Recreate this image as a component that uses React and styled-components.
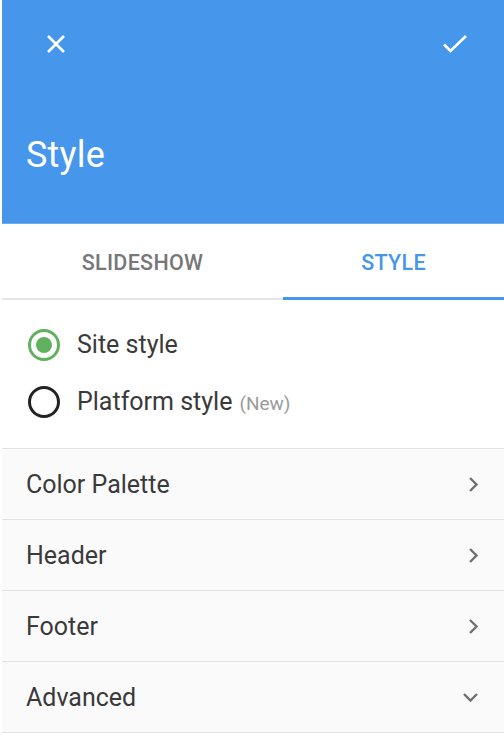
import React, { Component } from 'react'
import styled, { createGlobalStyle } from 'styled-components'

const GlobalStyle = createGlobalStyle`
  html, body {
    margin: 0;
    padding: 0;
    background: #ffffff;
  }
  body {
    font-family: Roboto, "Noto Sans", "Liberation Sans", sans-serif;
  }
`

const Page = styled.div`
  margin-left: 2px;
  width: 502px;
  height: 742px;
  background: #ffffff;
  overflow: hidden;
`

const Header = styled.header`
  height: 224px;
  background: #4696eb;
  color: #ffffff;
  display: flex;
  flex-direction: column;
  border-bottom: 1px solid #70adef;
  box-sizing: border-box;
`

const Toolbar = styled.div`
  height: 88px;
  display: flex;
  align-items: center;
  justify-content: space-between;
  padding: 0 29px 0 34px;
`

const IconButton = styled.button`
  width: 40px;
  height: 40px;
  padding: 0;
  border: none;
  background: transparent;
  display: flex;
  align-items: center;
  justify-content: center;
  cursor: pointer;
`

const Title = styled.h1`
  margin: 45px 0 0 24px;
  font-size: 36px;
  line-height: 44px;
  font-weight: 400;
  letter-spacing: 0.2px;
`

const Tabs = styled.nav`
  display: flex;
  height: 76px;
`

const Tab = styled.div`
  flex: 0 0 ${p => p.$width};
  display: flex;
  align-items: center;
  justify-content: center;
  padding-top: 3px;
  box-sizing: border-box;
  font-size: 21.5px;
  font-weight: 500;
  letter-spacing: 0.3px;
  color: ${p => (p.$active ? '#4696eb' : '#777777')};
  border-bottom: ${p => (p.$active ? '3px solid #4696eb' : '2px solid #e6e6e6')};
  cursor: pointer;
`

const RadioGroup = styled.div`
  display: flex;
  flex-direction: column;
  padding: 16px 0 18px 26px;
  border-bottom: 1px solid #e2e2e2;
`

const RadioRow = styled.label`
  height: 57px;
  display: flex;
  align-items: center;
  gap: 17px;
  font-size: 25px;
  color: #3a3a3a;
  cursor: pointer;
`

const RadioCircle = styled.span`
  width: 32px;
  height: 32px;
  box-sizing: border-box;
  border-radius: 50%;
  border: 3px solid ${p => (p.$checked ? '#62b15f' : '#222222')};
  display: flex;
  align-items: center;
  justify-content: center;

  &::after {
    content: '';
    width: 16px;
    height: 16px;
    border-radius: 50%;
    background: #62b15f;
    display: ${p => (p.$checked ? 'block' : 'none')};
  }
`

const Note = styled.span`
  margin-left: 7px;
  font-size: 19px;
  color: #9a9a9a;
`

const List = styled.ul`
  list-style: none;
  margin: 0;
  padding: 0;
`

const Row = styled.li`
  height: 70px;
  display: flex;
  align-items: center;
  justify-content: space-between;
  padding: 0 25px 0 24px;
  background: #fafafa;
  border-bottom: 1px solid #e2e2e2;
  font-size: 25px;
  color: #3a3a3a;
  cursor: pointer;
`

const Chevron = ({ down }) =>
  down ? (
    <svg width="17" height="11" viewBox="0 0 17 11">
      <path d="M2 2 L8.5 8.5 L15 2" fill="none" stroke="#707070" strokeWidth="2.4" />
    </svg>
  ) : (
    <svg width="11" height="17" viewBox="0 0 11 17">
      <path d="M2 2 L8.5 8.5 L2 15" fill="none" stroke="#707070" strokeWidth="2.4" />
    </svg>
  )

const CloseIcon = () => (
  <svg width="20" height="20" viewBox="0 0 20 20">
    <path d="M2 2 L18 18 M18 2 L2 18" stroke="#ffffff" strokeWidth="2.6" />
  </svg>
)

const CheckIcon = () => (
  <svg width="26" height="20" viewBox="0 0 26 20">
    <path d="M2 10.5 L8.5 17 L24 2" fill="none" stroke="#ffffff" strokeWidth="2.6" />
  </svg>
)

class App extends Component {
  constructor (props) {
    super(props)
    this.state = {
      tab: 'style',
      style: 'site',
    }
  }

  render () {
    const { tab, style } = this.state
    const rows = [
      { label: 'Color Palette' },
      { label: 'Header' },
      { label: 'Footer' },
      { label: 'Advanced', open: true },
    ]

    return (
      <Page>
        <GlobalStyle />
        <Header>
          <Toolbar>
            <IconButton aria-label="Close"><CloseIcon /></IconButton>
            <IconButton aria-label="Done"><CheckIcon /></IconButton>
          </Toolbar>
          <Title>Style</Title>
        </Header>

        <Tabs>
          <Tab $width="281px" $active={tab === 'slideshow'} onClick={() => this.setState({ tab: 'slideshow' })}>
            SLIDESHOW
          </Tab>
          <Tab $width="221px" $active={tab === 'style'} onClick={() => this.setState({ tab: 'style' })}>
            STYLE
          </Tab>
        </Tabs>

        <RadioGroup>
          <RadioRow onClick={() => this.setState({ style: 'site' })}>
            <RadioCircle $checked={style === 'site'} />
            Site style
          </RadioRow>
          <RadioRow onClick={() => this.setState({ style: 'platform' })}>
            <RadioCircle $checked={style === 'platform'} />
            <span>Platform style<Note>(New)</Note></span>
          </RadioRow>
        </RadioGroup>

        <List>
          {rows.map(row => (
            <Row key={row.label}>
              {row.label}
              <Chevron down={row.open} />
            </Row>
          ))}
        </List>
      </Page>
    )
  }
}

export default App
